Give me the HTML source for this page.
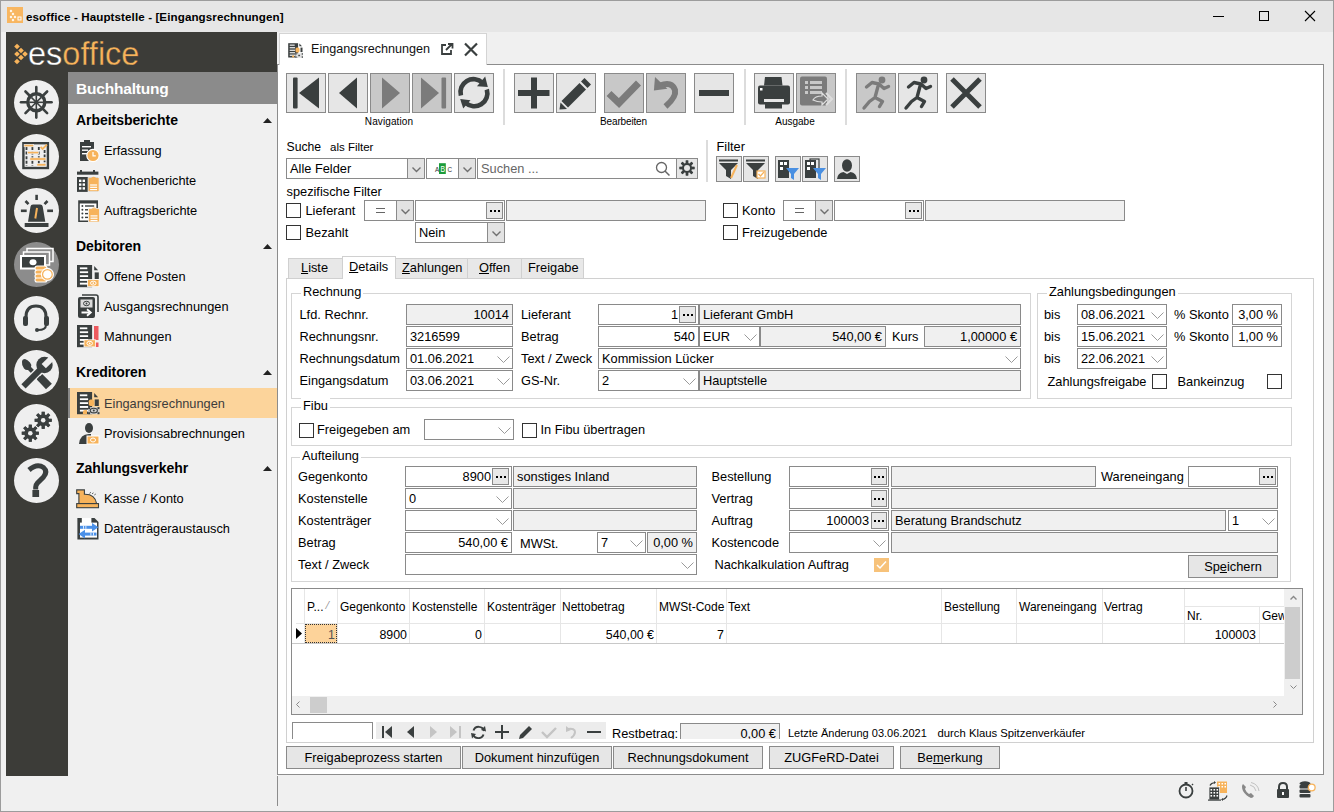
<!DOCTYPE html>
<html><head><meta charset="utf-8">
<style>
*{box-sizing:border-box;margin:0;padding:0}
html,body{width:1334px;height:812px;overflow:hidden;background:#f0f0f0;font-family:"Liberation Sans",sans-serif;font-size:13px;color:#000}
.a{position:absolute}
svg.a{overflow:visible}
.t{position:absolute;white-space:nowrap}
</style></head><body>
<div class="a" style="left:0px;top:0px;width:1334px;height:812px;background:#f0f0f0;"></div>
<div class="a" style="left:0px;top:0px;width:1334px;height:32px;background:#e6e6e6;"></div>
<div class="a" style="left:0px;top:0px;width:1334px;height:812px;border:1px solid #9c9c9c;z-index:50;"></div>
<div class="a" style="left:7px;top:7px;width:16px;height:16px;background:#f8b660;"></div>
<svg class="a" style="left:7px;top:7px;" width="16" height="16" viewBox="0 0 16 16"><g fill="#fff"><rect x="3" y="3" width="2" height="2" transform="rotate(45 4 4)"/><rect x="5" y="6" width="2" height="2" transform="rotate(45 6 7)"/><rect x="3" y="9" width="2" height="2" transform="rotate(45 4 10)"/><rect x="7" y="9" width="2" height="2" transform="rotate(45 8 10)"/><rect x="5" y="12" width="2" height="2" transform="rotate(45 6 13)"/><rect x="11" y="10" width="3" height="3" fill="none" stroke="#fff" stroke-width="1"/></g></svg>
<div class="t" style="left:26px;top:8.5px;height:16px;line-height:16px;font-size:11.6px;font-weight:bold;letter-spacing:0.1px;">esoffice - Hauptstelle - [Eingangsrechnungen]</div>
<div class="a" style="left:1213px;top:16px;width:11px;height:1px;background:#000;"></div>
<div class="a" style="left:1259px;top:11px;width:10px;height:10px;border:1px solid #000;"></div>
<svg class="a" style="left:1305px;top:11px;" width="10" height="10" viewBox="0 0 10 10"><path d="M0 0 L10 10 M10 0 L0 10" stroke="#000" stroke-width="1.1"/></svg>
<div class="a" style="left:6px;top:32px;width:62px;height:744px;background:#3c3c38;"></div>
<div class="a" style="left:6px;top:32px;width:271px;height:40px;background:#3c3c38;"></div>
<svg class="a" style="left:13px;top:43px;" width="16" height="22" viewBox="0 0 16 22"><g fill="#f7b35b"><rect x="2" y="1.5" width="4" height="4" transform="rotate(45 4 3.5)"/><rect x="6" y="5.5" width="4" height="4" transform="rotate(45 8 7.5)"/><rect x="2" y="9" width="4" height="4" transform="rotate(45 4 11)"/><rect x="10" y="9" width="4" height="4" transform="rotate(45 12 11)"/><rect x="6" y="12.5" width="4" height="4" transform="rotate(45 8 14.5)"/><rect x="2" y="16.5" width="4" height="4" transform="rotate(45 4 18.5)"/></g></svg>
<div class="t" style="left:28px;top:34.0px;height:40px;line-height:40px;font-size:32.5px;letter-spacing:0px;-webkit-text-stroke:0.35px #3c3c38;"><span style="color:#fff">es</span><span style="color:#f7b35b">office</span></div>
<div class="a" style="left:68px;top:72px;width:209px;height:704px;background:#f0f0f0;"></div>
<div class="a" style="left:68px;top:72px;width:209px;height:32px;background:#8b8b8b;"></div>
<div class="t" style="left:76px;top:78.0px;height:21px;line-height:21px;font-size:15.5px;font-weight:bold;color:#fff;letter-spacing:-0.2px;">Buchhaltung</div>
<div class="a" style="left:14px;top:79.5px;width:45px;height:45.0px;background:#efefef;border-radius:50%;"></div>
<div class="a" style="left:14px;top:133.5px;width:45px;height:45.0px;background:#efefef;border-radius:50%;"></div>
<div class="a" style="left:14px;top:187.5px;width:45px;height:45.0px;background:#efefef;border-radius:50%;"></div>
<div class="a" style="left:14px;top:241.5px;width:45px;height:45.0px;background:#8c8c8c;border-radius:50%;"></div>
<div class="a" style="left:14px;top:295.5px;width:45px;height:45.0px;background:#efefef;border-radius:50%;"></div>
<div class="a" style="left:14px;top:349.5px;width:45px;height:45.0px;background:#efefef;border-radius:50%;"></div>
<div class="a" style="left:14px;top:403.5px;width:45px;height:45.0px;background:#efefef;border-radius:50%;"></div>
<div class="a" style="left:14px;top:457.5px;width:45px;height:45.0px;background:#efefef;border-radius:50%;"></div>
<svg class="a" style="left:16px;top:82px;" width="40" height="40" viewBox="0 0 40 40"><g transform="translate(20.3 20.3)" stroke="#3a3f3f" fill="none"><circle r="8.5" stroke-width="3.4"/><g stroke-width="2.6" stroke-linecap="round"><line x1="0" y1="-10" x2="0" y2="-15.3" transform="rotate(0)"/><line x1="0" y1="-10" x2="0" y2="-15.3" transform="rotate(45)"/><line x1="0" y1="-10" x2="0" y2="-15.3" transform="rotate(90)"/><line x1="0" y1="-10" x2="0" y2="-15.3" transform="rotate(135)"/><line x1="0" y1="-10" x2="0" y2="-15.3" transform="rotate(180)"/><line x1="0" y1="-10" x2="0" y2="-15.3" transform="rotate(225)"/><line x1="0" y1="-10" x2="0" y2="-15.3" transform="rotate(270)"/><line x1="0" y1="-10" x2="0" y2="-15.3" transform="rotate(315)"/></g><g stroke-width="1.6"><line x1="0" y1="0" x2="0" y2="-7" transform="rotate(0)"/><line x1="0" y1="0" x2="0" y2="-7" transform="rotate(45)"/><line x1="0" y1="0" x2="0" y2="-7" transform="rotate(90)"/><line x1="0" y1="0" x2="0" y2="-7" transform="rotate(135)"/><line x1="0" y1="0" x2="0" y2="-7" transform="rotate(180)"/><line x1="0" y1="0" x2="0" y2="-7" transform="rotate(225)"/><line x1="0" y1="0" x2="0" y2="-7" transform="rotate(270)"/><line x1="0" y1="0" x2="0" y2="-7" transform="rotate(315)"/></g><circle r="2" fill="#3a3f3f" stroke="none"/></g></svg>
<svg class="a" style="left:16px;top:136px;" width="40" height="40" viewBox="0 0 40 40"><rect x="7.4" y="7.2" width="24.5" height="24.8" fill="none" stroke="#3a3f3f" stroke-width="2.4"/><g stroke="#3a3f3f" stroke-width="1.8" stroke-dasharray="3 1.6"><line x1="10.5" y1="11" x2="10.5" y2="30"/><line x1="16.4" y1="11" x2="16.4" y2="30"/><line x1="22.8" y1="11" x2="22.8" y2="30"/><line x1="28.6" y1="14" x2="28.6" y2="30"/></g><g fill="#f7b35b" stroke="#efefef" stroke-width="0.6"><rect x="8.1" y="8.4" width="9.6" height="2.4"/><rect x="11.3" y="15.4" width="11.5" height="2.4"/><rect x="13.9" y="21.8" width="16" height="2.4"/><rect x="20.9" y="27.6" width="9" height="2.4"/></g><path d="M24.6 10.8 L26.6 13 L31 8.6" stroke="#f7b35b" stroke-width="1.8" fill="none"/></svg>
<svg class="a" style="left:16px;top:190px;" width="40" height="40" viewBox="0 0 40 40"><path d="M12 31.7 L14.5 16.5 Q14.8 14.4 17 14.4 H24.2 Q26.4 14.4 26.7 16.5 L29.3 31.7 Z" fill="#3a3f3f"/><rect x="8.7" y="33" width="23.8" height="4" fill="#3a3f3f"/><path d="M21 18 L19.3 28.5" stroke="#f7b35b" stroke-width="2"/><g stroke="#3a3f3f" stroke-width="2.6"><line x1="20.6" y1="4.8" x2="20.6" y2="10"/><line x1="9.5" y1="11" x2="12.5" y2="14.2"/><line x1="31.5" y1="11" x2="28.5" y2="14.2"/><line x1="4.9" y1="20.8" x2="10.7" y2="20.8"/><line x1="31.2" y1="20.8" x2="37" y2="20.8"/></g></svg>
<svg class="a" style="left:16px;top:244px;" width="40" height="40" viewBox="0 0 40 40"><g fill="#8c8c8c" stroke="#fff" stroke-width="1.5"><rect x="11" y="4.5" width="26" height="13"/><rect x="7.5" y="8" width="26" height="13"/></g><rect x="4" y="11" width="26" height="14.5" fill="#fff"/><rect x="6" y="13" width="22" height="10.5" fill="#3a3f3f"/><ellipse cx="17" cy="18.2" rx="3.5" ry="3" fill="#fff"/><g fill="#f7b35b" stroke="#fff" stroke-width="1.1"><rect x="19" y="22" width="12" height="4.5" rx="2.2"/><rect x="19" y="26" width="12" height="4.5" rx="2.2"/><rect x="19" y="30" width="12" height="4.5" rx="2.2"/><rect x="19" y="34" width="12" height="4" rx="2"/><circle cx="31.4" cy="30.4" r="6"/></g><circle cx="31.4" cy="30.4" r="4.2" fill="#fff"/></svg>
<svg class="a" style="left:16px;top:298px;" width="40" height="40" viewBox="0 0 40 40"><path d="M10 24 L10 19 Q10 8 20 8 Q30 8 30 19 L30 24" fill="none" stroke="#3a3f3f" stroke-width="3"/><rect x="7" y="18" width="5" height="10" rx="2" fill="#3a3f3f"/><rect x="28" y="18" width="5" height="10" rx="2" fill="#3a3f3f"/><path d="M30 27 Q30 32 22 32" fill="none" stroke="#3a3f3f" stroke-width="2"/><circle cx="21" cy="32" r="2" fill="#3a3f3f"/></svg>
<svg class="a" style="left:16px;top:352px;" width="40" height="40" viewBox="0 0 40 40"><g fill="#3a3f3f"><path d="M6 10 Q6 7 9 7 Q11.5 7.5 14 10.5 Q16 13 15 15 L26 26 L23 29 L12 18 Q10 18.5 8 16.5 Q5.5 13 6 10 Z"/><path d="M26.2 22.1 L35.9 31.8 L30 37.2 L20.8 27.5 Z"/></g><path d="M7.5 34.3 L24 17.8" stroke="#efefef" stroke-width="8.6" stroke-linecap="butt"/><path d="M7.5 34.3 L24 17.8" stroke="#3a3f3f" stroke-width="6"/><circle cx="28.5" cy="13" r="8.2" fill="#3a3f3f"/><rect x="29" y="4" width="6" height="12" fill="#efefef" transform="rotate(45 32 10)"/></svg>
<svg class="a" style="left:16px;top:406px;" width="40" height="40" viewBox="0 0 40 40"><circle cx="27.2" cy="14.3" r="6" fill="#3a3f3f"/><rect x="25.7" y="5.800000000000001" width="3" height="17" fill="#3a3f3f" transform="rotate(0.0 27.2 14.3)"/><rect x="25.7" y="5.800000000000001" width="3" height="17" fill="#3a3f3f" transform="rotate(45.0 27.2 14.3)"/><rect x="25.7" y="5.800000000000001" width="3" height="17" fill="#3a3f3f" transform="rotate(90.0 27.2 14.3)"/><rect x="25.7" y="5.800000000000001" width="3" height="17" fill="#3a3f3f" transform="rotate(135.0 27.2 14.3)"/><rect x="25.7" y="5.800000000000001" width="3" height="17" fill="#3a3f3f" transform="rotate(180.0 27.2 14.3)"/><rect x="25.7" y="5.800000000000001" width="3" height="17" fill="#3a3f3f" transform="rotate(225.0 27.2 14.3)"/><rect x="25.7" y="5.800000000000001" width="3" height="17" fill="#3a3f3f" transform="rotate(270.0 27.2 14.3)"/><rect x="25.7" y="5.800000000000001" width="3" height="17" fill="#3a3f3f" transform="rotate(315.0 27.2 14.3)"/><circle cx="27.2" cy="14.3" r="2.2800000000000002" fill="#efefef"/><circle cx="14.3" cy="27.2" r="6" fill="#3a3f3f"/><rect x="12.8" y="18.7" width="3" height="17" fill="#3a3f3f" transform="rotate(0.0 14.3 27.2)"/><rect x="12.8" y="18.7" width="3" height="17" fill="#3a3f3f" transform="rotate(45.0 14.3 27.2)"/><rect x="12.8" y="18.7" width="3" height="17" fill="#3a3f3f" transform="rotate(90.0 14.3 27.2)"/><rect x="12.8" y="18.7" width="3" height="17" fill="#3a3f3f" transform="rotate(135.0 14.3 27.2)"/><rect x="12.8" y="18.7" width="3" height="17" fill="#3a3f3f" transform="rotate(180.0 14.3 27.2)"/><rect x="12.8" y="18.7" width="3" height="17" fill="#3a3f3f" transform="rotate(225.0 14.3 27.2)"/><rect x="12.8" y="18.7" width="3" height="17" fill="#3a3f3f" transform="rotate(270.0 14.3 27.2)"/><rect x="12.8" y="18.7" width="3" height="17" fill="#3a3f3f" transform="rotate(315.0 14.3 27.2)"/><circle cx="14.3" cy="27.2" r="2.2800000000000002" fill="#efefef"/></svg>
<svg class="a" style="left:16px;top:460px;" width="40" height="40" viewBox="0 0 40 40"><path d="M13 10 Q21 3 27.5 7.5 Q32 11.5 27.5 17 L21.5 23 Q19.7 25 19.7 27 V29.5" fill="none" stroke="#3a3f3f" stroke-width="5"/><rect x="16.4" y="30" width="6.7" height="7" fill="#3a3f3f"/></svg>
<div class="a" style="left:68px;top:388px;width:209px;height:30px;background:#fcd49b;"></div>
<div class="a" style="left:68px;top:388px;width:2px;height:30px;background:#8a8a8a;"></div>
<div class="t" style="left:76px;top:110.5px;height:19px;line-height:19px;font-size:14px;font-weight:bold;letter-spacing:-0.05px;">Arbeitsberichte</div>
<svg class="a" style="left:263px;top:118px;" width="9" height="5" viewBox="0 0 9 5"><path d="M0 5 L4.5 0 L9 5 Z" fill="#222"/></svg>
<div class="t" style="left:76px;top:236.5px;height:19px;line-height:19px;font-size:14px;font-weight:bold;letter-spacing:-0.05px;">Debitoren</div>
<svg class="a" style="left:263px;top:244px;" width="9" height="5" viewBox="0 0 9 5"><path d="M0 5 L4.5 0 L9 5 Z" fill="#222"/></svg>
<div class="t" style="left:76px;top:362.5px;height:19px;line-height:19px;font-size:14px;font-weight:bold;letter-spacing:-0.05px;">Kreditoren</div>
<svg class="a" style="left:263px;top:370px;" width="9" height="5" viewBox="0 0 9 5"><path d="M0 5 L4.5 0 L9 5 Z" fill="#222"/></svg>
<div class="t" style="left:76px;top:458.5px;height:19px;line-height:19px;font-size:14px;font-weight:bold;letter-spacing:-0.05px;">Zahlungsverkehr</div>
<svg class="a" style="left:263px;top:466px;" width="9" height="5" viewBox="0 0 9 5"><path d="M0 5 L4.5 0 L9 5 Z" fill="#222"/></svg>
<div class="t" style="left:104px;top:141.5px;height:17px;line-height:17px;font-size:12.8px;">Erfassung</div>
<div class="t" style="left:104px;top:171.5px;height:17px;line-height:17px;font-size:12.8px;">Wochenberichte</div>
<div class="t" style="left:104px;top:201.5px;height:17px;line-height:17px;font-size:12.8px;">Auftragsberichte</div>
<div class="t" style="left:104px;top:267.5px;height:17px;line-height:17px;font-size:12.8px;">Offene Posten</div>
<div class="t" style="left:104px;top:297.5px;height:17px;line-height:17px;font-size:12.8px;">Ausgangsrechnungen</div>
<div class="t" style="left:104px;top:327.5px;height:17px;line-height:17px;font-size:12.8px;">Mahnungen</div>
<div class="t" style="left:104px;top:394.5px;height:17px;line-height:17px;font-size:12.8px;color:#3c3c3c;">Eingangsrechnungen</div>
<div class="t" style="left:104px;top:424.5px;height:17px;line-height:17px;font-size:12.8px;">Provisionsabrechnungen</div>
<div class="t" style="left:104px;top:489.5px;height:17px;line-height:17px;font-size:12.8px;">Kasse / Konto</div>
<div class="t" style="left:104px;top:519.5px;height:17px;line-height:17px;font-size:12.8px;">Datentr&auml;geraustausch</div>
<svg class="a" style="left:78px;top:139px;" width="22" height="24" viewBox="0 0 22 24"><path d="M2 3 H16 V22 H2 Z" fill="#3a3f3f"/><rect x="6" y="1" width="6" height="3" fill="#3a3f3f"/><g fill="#fff"><rect x="4" y="7" width="9" height="1.4"/><rect x="4" y="10.5" width="6" height="1.4"/><rect x="4" y="14" width="5" height="1.4"/></g><circle cx="15" cy="16.5" r="6.2" fill="#f7b35b" stroke="#fff" stroke-width="1.2"/><path d="M15 13 V16.8 H17.8" stroke="#fff" stroke-width="1.2" fill="none"/></svg>
<svg class="a" style="left:74px;top:164px;" width="30" height="62" viewBox="0 0 30 62"><rect x="3" y="7.6" width="21.4" height="3.1" fill="#3a3f3f"/><rect x="6" y="6" width="2" height="2" fill="#3a3f3f"/><rect x="19" y="6" width="2" height="2" fill="#3a3f3f"/><rect x="3" y="13" width="21" height="14.9" fill="#3a3f3f"/><g fill="#fff"><rect x="5" y="15.6" width="2.4" height="2.4"/><rect x="8.6" y="15.6" width="2.4" height="2.4"/><rect x="5" y="19.4" width="2.4" height="2.4"/><rect x="8.6" y="19.4" width="2.4" height="2.4"/><rect x="5" y="23.2" width="2.4" height="2.4"/><rect x="8.6" y="23.2" width="2.4" height="2.4"/></g><rect x="14.1" y="13.6" width="11" height="14" fill="#f7b35b" stroke="#f0f0f0" stroke-width="0.8"/><path d="M17.1 13.9 Q19.6 11.399999999999999 22.1 13.9 Z" fill="#f7b35b"/><g fill="#fff"><rect x="16.1" y="20.4" width="7" height="1.2"/><rect x="16.1" y="22.7" width="7" height="1.2"/><rect x="16.1" y="25.0" width="7" height="1.2"/></g></svg>
<svg class="a" style="left:74px;top:164px;" width="30" height="62" viewBox="0 0 30 62"><rect x="4.2" y="36.3" width="19.8" height="21.7" fill="#3a3f3f"/><rect x="5.8" y="39.5" width="16.6" height="17" fill="#fff"/><g fill="#3a3f3f"><circle cx="8.4" cy="42" r="1"/><circle cx="8.4" cy="45.8" r="1"/><circle cx="8.4" cy="49.6" r="1"/><circle cx="8.4" cy="53.4" r="1"/><rect x="11" y="41.3" width="9.2" height="1.4"/><rect x="11" y="45.1" width="3" height="1.4"/><rect x="11" y="48.9" width="3" height="1.4"/><rect x="11" y="52.7" width="3" height="1.4"/></g><rect x="14.5" y="44.5" width="11" height="13.5" fill="#f7b35b" stroke="#f0f0f0" stroke-width="0.8"/><path d="M17.5 44.8 Q20.0 42.3 22.5 44.8 Z" fill="#f7b35b"/><g fill="#fff"><rect x="16.5" y="51.3" width="7" height="1.2"/><rect x="16.5" y="53.6" width="7" height="1.2"/><rect x="16.5" y="55.9" width="7" height="1.2"/></g></svg>
<svg class="a" style="left:77px;top:265px;" width="24" height="24" viewBox="0 0 24 24"><rect x="0" y="0" width="15.1" height="22.2" fill="#3a3f3f"/><g fill="#fff"><rect x="2.9" y="2.4" width="7.4" height="1.8"/><rect x="2.9" y="6.3" width="8.2" height="1.8"/><rect x="2.9" y="10.2" width="8.2" height="1.8"/><rect x="2.9" y="14" width="8.2" height="1.9"/><rect x="2.9" y="17.7" width="8.2" height="1.9"/></g><path d="M17.2 1.1 L21.1 5.2 L17.2 5.2 Z" fill="#3a3f3f"/><rect x="17.7" y="7.4" width="4.1" height="6.6" fill="#3a3f3f"/><rect x="10.6" y="14.6" width="11.4" height="7.1" fill="#f7b35b" stroke="#fff" stroke-width="0.8"/><ellipse cx="16.3" cy="18.15" rx="2.8" ry="2" fill="none" stroke="#fff" stroke-width="1"/><circle cx="16.3" cy="18.15" r="0.8" fill="#fff"/></svg>
<svg class="a" style="left:77px;top:294px;" width="24" height="26" viewBox="0 0 24 26"><path d="M5 1 H19 Q21 1 21 3 V18" fill="none" stroke="#3a3f3f" stroke-width="1.6"/><rect x="1" y="3" width="17" height="21" rx="2" fill="#3a3f3f"/><rect x="3.5" y="5.5" width="12" height="8" fill="#dcdcdc"/><ellipse cx="9.5" cy="9.5" rx="3" ry="2.2" fill="none" stroke="#3a3f3f" stroke-width="1"/><circle cx="9.5" cy="9.5" r="0.9" fill="#3a3f3f"/><path d="M4.5 18.5 H12.5" stroke="#fff" stroke-width="2"/><path d="M10 15.3 L13.8 18.5 L10 21.7" fill="none" stroke="#fff" stroke-width="1.8"/></svg>
<svg class="a" style="left:77px;top:325px;" width="24" height="24" viewBox="0 0 24 24"><rect x="0" y="0" width="15.1" height="22.2" fill="#3a3f3f"/><g fill="#fff"><rect x="2.9" y="2.4" width="7.4" height="1.8"/><rect x="2.9" y="6.3" width="8.2" height="1.8"/><rect x="2.9" y="10.2" width="8.2" height="1.8"/><rect x="2.9" y="14" width="8.2" height="1.9"/><rect x="2.9" y="17.7" width="8.2" height="1.9"/></g><rect x="17" y="1" width="4.5" height="14" fill="#ee5a5f"/><rect x="17" y="17.5" width="4.5" height="4.5" fill="#ee5a5f"/><rect x="7" y="14.8" width="11.4" height="7.1" fill="#f7b35b" stroke="#fff" stroke-width="0.8"/><ellipse cx="12.7" cy="18.35" rx="2.8" ry="2" fill="none" stroke="#fff" stroke-width="1"/><circle cx="12.7" cy="18.35" r="0.8" fill="#fff"/></svg>
<svg class="a" style="left:77px;top:392px;" width="24" height="24" viewBox="0 0 24 24"><rect x="0" y="0" width="15.1" height="22.2" fill="#3a3f3f"/><g fill="#fff"><rect x="2.9" y="2.4" width="7.4" height="1.8"/><rect x="2.9" y="6.3" width="8.2" height="1.8"/><rect x="2.9" y="10.2" width="8.2" height="1.8"/><rect x="2.9" y="14" width="8.2" height="1.9"/><rect x="2.9" y="17.7" width="8.2" height="1.9"/></g><path d="M17.2 1.1 L21.1 5.2 L17.2 5.2 Z" fill="#3a3f3f"/><rect x="17.7" y="7.4" width="4.1" height="6.6" fill="#3a3f3f"/><rect x="11.8" y="7.4" width="5.2" height="6.6" rx="1.8" fill="#f7b35b"/><path d="M5.9 22 V20 Q5.9 18.1 8 18.1 H10 V22 Z" fill="#f7b35b"/><rect x="11.1" y="15.1" width="11.4" height="7.1" fill="#cfcfcf"/><g fill="#3a3f3f"><rect x="11.1" y="15.1" width="2" height="2"/><rect x="20.5" y="15.1" width="2" height="2"/><rect x="11.1" y="20.2" width="2" height="2"/><rect x="20.5" y="20.2" width="2" height="2"/></g><ellipse cx="16.8" cy="18.6" rx="3.6" ry="2.3" fill="none" stroke="#3a3f3f" stroke-width="1.1"/><circle cx="16.8" cy="18.6" r="1" fill="#3a3f3f"/></svg>
<svg class="a" style="left:78px;top:422px;" width="22" height="24" viewBox="0 0 22 24"><ellipse cx="11" cy="6" rx="4" ry="5" fill="#3a3f3f"/><path d="M1 22 Q2 12 11 12 L13 12 L13 22 Z" fill="#3a3f3f"/><rect x="9" y="14" width="12" height="8" fill="#f7b35b" stroke="#fff" stroke-width="1"/><ellipse cx="15" cy="18" rx="2.5" ry="2" fill="none" stroke="#fff" stroke-width="1"/></svg>
<svg class="a" style="left:70px;top:484px;" width="34" height="30" viewBox="0 0 34 30"><path d="M6.7 5.9 H14.4 V10.3 Q25 10 26.6 19.6 H8.9 V9.6 H6.7 Z" fill="#f7b35b" stroke="#3a3f3f" stroke-width="1.1"/><rect x="6.7" y="19.6" width="21.8" height="4.1" fill="#f7b35b" stroke="#3a3f3f" stroke-width="1.1"/><path d="M19.5 9.3 L21 8.3 M22 9.8 L23.5 8.8 M24.3 11 L25.8 10" stroke="#3a3f3f" stroke-width="0.8"/></svg>
<svg class="a" style="left:70px;top:484px;" width="34" height="60" viewBox="0 0 34 60"><path d="M7.4 34 H24.5 L28.5 38 V55.4 H7.4 Z" fill="#3a3f3f"/><rect x="11.8" y="34" width="9.6" height="5" fill="#fff"/><rect x="10" y="38.6" width="17" height="15" fill="#fff"/><g fill="#4a90e8"><rect x="10" y="41.8" width="13" height="3"/><path d="M22 39 L28.5 43.3 L22 47.6 Z"/><rect x="14" y="48.6" width="12.5" height="3"/><path d="M15 45.8 L8.6 50.1 L15 54.4 Z"/></g><g fill="#fff"><rect x="13" y="41.8" width="0.8" height="3"/><rect x="15.5" y="41.8" width="0.8" height="3"/><rect x="20.5" y="48.6" width="0.8" height="3"/><rect x="23" y="48.6" width="0.8" height="3"/></g></svg>
<div class="a" style="left:277px;top:64px;width:1047px;height:711px;background:#fff;border:1px solid #8c8c8c;"></div>
<div class="a" style="left:279px;top:33px;width:208px;height:32px;background:#fff;border:1px solid #d4d4d4;border-bottom:none;"></div>
<svg class="a" style="left:287.5px;top:42.5px;" width="16" height="16" viewBox="0 0 16 16"><rect x="0.2" y="0.2" width="9.9" height="14.3" fill="#3a3f3f"/><g fill="#fff"><rect x="1.7" y="1.6" width="5" height="1.1"/><rect x="1.7" y="4.2" width="5.4" height="1.1"/><rect x="1.7" y="6.7" width="5.4" height="1.1"/><rect x="1.7" y="9.2" width="5.4" height="1.1"/><rect x="1.7" y="11.6" width="5.4" height="1.2"/></g><path d="M11.4 0.5 L14 3.2 L11.4 3.2 Z" fill="#3a3f3f"/><rect x="12.5" y="4.6" width="2" height="4.5" fill="#3a3f3f"/><rect x="7.5" y="4.6" width="4" height="5" rx="1.5" fill="#f7b35b"/><circle cx="5.2" cy="13.4" r="1.1" fill="#f7b35b"/><rect x="7.3" y="10.3" width="7.7" height="4.4" fill="#ddd"/><g fill="#3a3f3f"><rect x="7.3" y="10.3" width="1.3" height="1.3"/><rect x="13.7" y="10.3" width="1.3" height="1.3"/><rect x="7.3" y="13.4" width="1.3" height="1.3"/><rect x="13.7" y="13.4" width="1.3" height="1.3"/><rect x="10.3" y="11.8" width="1.6" height="1.4"/></g></svg>
<div class="t" style="left:311px;top:41.0px;height:17px;line-height:17px;font-size:12.6px;color:#111;">Eingangsrechnungen</div>
<svg class="a" style="left:440px;top:43px;" width="14" height="13" viewBox="0 0 14 13"><path d="M6 2 H2 V11 H11 V7" fill="none" stroke="#3a3f3f" stroke-width="1.8"/><path d="M6 7 L12 1 M8 1 H12.5 V5.5" fill="none" stroke="#3a3f3f" stroke-width="1.8"/></svg>
<svg class="a" style="left:464px;top:43px;" width="14" height="13" viewBox="0 0 14 13"><path d="M1 0.5 L13 12.5 M13 0.5 L1 12.5" stroke="#3a3f3f" stroke-width="2.2"/></svg>
<div class="a" style="left:286px;top:73px;width:40px;height:40px;background:#e6e6e6;border:1px solid #8a8a8a;"></div>
<svg class="a" style="left:286px;top:73px;" width="40" height="40" viewBox="0 0 40 40"><rect x="7" y="4.5" width="4.6" height="31" rx="1" fill="#3a3f3f"/><path d="M33 4.5 L13 20 L33 35.5 Z" fill="#3a3f3f"/></svg>
<div class="a" style="left:328px;top:73px;width:40px;height:40px;background:#e6e6e6;border:1px solid #8a8a8a;"></div>
<svg class="a" style="left:328px;top:73px;" width="40" height="40" viewBox="0 0 40 40"><path d="M29 4.5 L11 20 L29 35.5 Z" fill="#3a3f3f"/></svg>
<div class="a" style="left:370px;top:73px;width:40px;height:40px;background:#c8c8c8;border:1px solid #8a8a8a;"></div>
<svg class="a" style="left:370px;top:73px;" width="40" height="40" viewBox="0 0 40 40"><path d="M12 4.5 L30 20 L12 35.5 Z" fill="#7b7b7b"/></svg>
<div class="a" style="left:412px;top:73px;width:40px;height:40px;background:#c8c8c8;border:1px solid #8a8a8a;"></div>
<svg class="a" style="left:412px;top:73px;" width="40" height="40" viewBox="0 0 40 40"><path d="M9 4.5 L27 20 L9 35.5 Z" fill="#7b7b7b"/><rect x="29.5" y="4.5" width="4.6" height="31" rx="1" fill="#7b7b7b"/></svg>
<div class="a" style="left:454px;top:73px;width:40px;height:40px;background:#e6e6e6;border:1px solid #8a8a8a;"></div>
<svg class="a" style="left:454px;top:73px;" width="40" height="40" viewBox="0 0 40 40"><g fill="none" stroke="#3a3f3f" stroke-width="4.6"><path d="M6.9 22.5 A13 13 0 0 1 28.5 9.8"/><path d="M32.8 16.5 A13 13 0 0 1 11.5 29.8"/></g><path d="M23 13.3 L31.2 3.6 L33.8 14 Z" fill="#3a3f3f"/><path d="M16.5 27.3 L9.2 35.6 L6.2 25.9 Z" fill="#3a3f3f"/></svg>
<div class="a" style="left:503px;top:69px;width:2px;height:56px;background:#dcdcdc;"></div>
<div class="a" style="left:514px;top:73px;width:40px;height:40px;background:#e6e6e6;border:1px solid #8a8a8a;"></div>
<svg class="a" style="left:514px;top:73px;" width="40" height="40" viewBox="0 0 40 40"><rect x="17" y="4.5" width="6" height="31" fill="#3a3f3f"/><rect x="4" y="17" width="31.5" height="6" fill="#3a3f3f"/></svg>
<div class="a" style="left:556px;top:73px;width:40px;height:40px;background:#e6e6e6;border:1px solid #8a8a8a;"></div>
<svg class="a" style="left:556px;top:73px;" width="40" height="40" viewBox="0 0 40 40"><path d="M28.5 5 L35 11.5 L31.5 15 L25 8.5 Z" fill="#3a3f3f"/><path d="M23.5 10 L30 16.5 L12 34.5 L5.5 28 Z" fill="#3a3f3f"/><path d="M4.5 29.5 L11 36 L3.5 36.5 Z" fill="#3a3f3f"/></svg>
<div class="a" style="left:604px;top:73px;width:40px;height:40px;background:#c8c8c8;border:1px solid #8a8a8a;"></div>
<svg class="a" style="left:604px;top:73px;" width="40" height="40" viewBox="0 0 40 40"><path d="M5 20.5 L15 30 L34.5 10" fill="none" stroke="#7b7b7b" stroke-width="7" stroke-linejoin="miter"/></svg>
<div class="a" style="left:646px;top:73px;width:40px;height:40px;background:#c8c8c8;border:1px solid #8a8a8a;"></div>
<svg class="a" style="left:646px;top:73px;" width="40" height="40" viewBox="0 0 40 40"><path d="M14 12.5 Q26 8 29 17 Q30.5 24 19.5 33.5" fill="none" stroke="#7b7b7b" stroke-width="6"/><path d="M9 4 L7.9 17.4 L21.4 15.7 Z" fill="#7b7b7b"/></svg>
<div class="a" style="left:694px;top:73px;width:40px;height:40px;background:#e6e6e6;border:1px solid #8a8a8a;"></div>
<svg class="a" style="left:694px;top:73px;" width="40" height="40" viewBox="0 0 40 40"><rect x="5" y="17" width="30" height="6" fill="#3a3f3f"/></svg>
<div class="a" style="left:744px;top:69px;width:2px;height:56px;background:#dcdcdc;"></div>
<div class="a" style="left:754px;top:73px;width:40px;height:40px;background:#e6e6e6;border:1px solid #8a8a8a;"></div>
<svg class="a" style="left:754px;top:73px;" width="40" height="40" viewBox="0 0 40 40"><path d="M11 4 H27.5 L28.5 12.5 H10 Z" fill="#3a3f3f"/><rect x="4" y="12.5" width="32" height="19" rx="2" fill="#3a3f3f"/><rect x="10" y="26" width="20" height="3" fill="#e6e6e6"/><rect x="11" y="29" width="17" height="6.5" fill="#3a3f3f"/><rect x="6" y="15" width="2.5" height="2.5" fill="#fff"/></svg>
<div class="a" style="left:796px;top:73px;width:40px;height:40px;background:#c8c8c8;border:1px solid #8a8a8a;"></div>
<svg class="a" style="left:796px;top:73px;" width="40" height="40" viewBox="0 0 40 40"><rect x="4" y="3.5" width="27" height="29" rx="2" fill="#7b7b7b"/><g fill="#c8c8c8"><rect x="9" y="8" width="3" height="3"/><rect x="14" y="8" width="12" height="3"/><rect x="9" y="13" width="3" height="3"/><rect x="14" y="13" width="12" height="3"/><rect x="9" y="18" width="3" height="3"/><rect x="14" y="18" width="12" height="3"/></g><path d="M17 27 Q19 23 26 23 L26 20 L32 26 L26 32 L26 29 Q21 29 17 27 Z" fill="#7b7b7b" stroke="#ddd" stroke-width="1.2"/><path d="M30 20 L36 26 L30 32" fill="none" stroke="#ddd" stroke-width="2"/></svg>
<div class="a" style="left:845px;top:69px;width:2px;height:56px;background:#dcdcdc;"></div>
<div class="a" style="left:856px;top:73px;width:40px;height:40px;background:#c8c8c8;border:1px solid #8a8a8a;"></div>
<svg class="a" style="left:856px;top:73px;" width="40" height="40" viewBox="0 0 40 40"><circle cx="26" cy="7" r="3.4" fill="#7b7b7b"/><path d="M10.5 14 L16 9.5 L23 11 L28 15.5 L32.5 13.5 M22.5 11.5 L19 24.5 L26.5 28.5 L23.5 33.5 M19 24.5 L13.5 28.5 L8 35" fill="none" stroke="#7b7b7b" stroke-width="3.4" stroke-linecap="round" stroke-linejoin="round"/></svg>
<div class="a" style="left:898px;top:73px;width:40px;height:40px;background:#e6e6e6;border:1px solid #8a8a8a;"></div>
<svg class="a" style="left:898px;top:73px;" width="40" height="40" viewBox="0 0 40 40"><circle cx="26" cy="7" r="3.4" fill="#3a3f3f"/><path d="M10.5 14 L16 9.5 L23 11 L28 15.5 L32.5 13.5 M22.5 11.5 L19 24.5 L26.5 28.5 L23.5 33.5 M19 24.5 L13.5 28.5 L8 35" fill="none" stroke="#3a3f3f" stroke-width="3.4" stroke-linecap="round" stroke-linejoin="round"/></svg>
<div class="a" style="left:946px;top:73px;width:40px;height:40px;background:#e6e6e6;border:1px solid #8a8a8a;"></div>
<svg class="a" style="left:946px;top:73px;" width="40" height="40" viewBox="0 0 40 40"><path d="M6 6 L34 34 M34 6 L6 34" stroke="#3a3f3f" stroke-width="5"/></svg>
<div class="t" style="left:289.0px;width:200px;text-align:center;top:115.0px;height:14px;line-height:14px;font-size:10px;letter-spacing:0.1px;">Navigation</div>
<div class="t" style="left:523.5px;width:200px;text-align:center;top:115.0px;height:14px;line-height:14px;font-size:10px;letter-spacing:-0.15px;">Bearbeiten</div>
<div class="t" style="left:695.0px;width:200px;text-align:center;top:115.0px;height:14px;line-height:14px;font-size:10px;">Ausgabe</div>
<div class="t" style="left:286.5px;top:138.5px;height:17px;line-height:17px;font-size:12.2px;">Suche</div>
<div class="t" style="left:330px;top:138.8px;height:16px;line-height:16px;font-size:11.5px;">als Filter</div>
<div class="a" style="left:286px;top:158px;width:139px;height:21px;background:#fff;border:1px solid #8a8a8a;"></div>
<div class="t" style="left:290px;top:160.0px;height:17px;line-height:17px;font-size:12.8px;">Alle Felder</div>
<div class="a" style="left:407px;top:159px;width:17px;height:19px;background:#e3e3e3;border-left:1px solid #8a8a8a;"></div>
<svg class="a" style="left:412px;top:166.5px;" width="9" height="5" viewBox="0 0 9 5"><path d="M0.5 0.5 L4.5 4.5 L8.5 0.5" fill="none" stroke="#707070" stroke-width="1.4"/></svg>
<div class="a" style="left:426px;top:158px;width:50px;height:21px;background:#fff;border:1px solid #8a8a8a;"></div>
<div class="a" style="left:458px;top:159px;width:17px;height:19px;background:#e3e3e3;border-left:1px solid #8a8a8a;"></div>
<svg class="a" style="left:463px;top:166.5px;" width="9" height="5" viewBox="0 0 9 5"><path d="M0.5 0.5 L4.5 4.5 L8.5 0.5" fill="none" stroke="#707070" stroke-width="1.4"/></svg>
<svg class="a" style="left:433px;top:162px;" width="22" height="14" viewBox="0 0 22 14"><text x="2" y="10.5" font-size="8" font-family="Liberation Sans" fill="#333" transform="scale(0.8 1)" transform-origin="2 10">A</text><rect x="6" y="1.2" width="6.8" height="10.8" fill="#1a9c3a"/><text x="7.4" y="10.3" font-size="8.5" font-family="Liberation Sans" fill="#fff" transform="scale(0.8 1)" transform-origin="7.4 10">B</text><text x="14.5" y="10.5" font-size="8" font-family="Liberation Sans" fill="#333" transform="scale(0.8 1)" transform-origin="14.5 10">C</text></svg>
<div class="a" style="left:477px;top:158px;width:200px;height:21px;background:#fff;border:1px solid #8a8a8a;"></div>
<div class="t" style="left:481px;top:160.0px;height:17px;line-height:17px;font-size:12.8px;color:#666;">Suchen ...</div>
<svg class="a" style="left:655px;top:161px;" width="16" height="15" viewBox="0 0 16 15"><circle cx="6.5" cy="6.5" r="5" fill="none" stroke="#666" stroke-width="1.3"/><path d="M10 10 L14.5 14.5" stroke="#666" stroke-width="1.5"/></svg>
<div class="a" style="left:676px;top:158px;width:22px;height:21px;background:#e6e6e6;border:1px solid #8a8a8a;"></div>
<svg class="a" style="left:677px;top:158px;" width="20" height="20" viewBox="0 0 20 20"><circle cx="10" cy="10" r="5" fill="#3a3f3f"/><rect x="8.8" y="2.5" width="2.4" height="15" fill="#3a3f3f" transform="rotate(0.0 10 10)"/><rect x="8.8" y="2.5" width="2.4" height="15" fill="#3a3f3f" transform="rotate(45.0 10 10)"/><rect x="8.8" y="2.5" width="2.4" height="15" fill="#3a3f3f" transform="rotate(90.0 10 10)"/><rect x="8.8" y="2.5" width="2.4" height="15" fill="#3a3f3f" transform="rotate(135.0 10 10)"/><rect x="8.8" y="2.5" width="2.4" height="15" fill="#3a3f3f" transform="rotate(180.0 10 10)"/><rect x="8.8" y="2.5" width="2.4" height="15" fill="#3a3f3f" transform="rotate(225.0 10 10)"/><rect x="8.8" y="2.5" width="2.4" height="15" fill="#3a3f3f" transform="rotate(270.0 10 10)"/><rect x="8.8" y="2.5" width="2.4" height="15" fill="#3a3f3f" transform="rotate(315.0 10 10)"/><circle cx="10" cy="10" r="3" fill="#e6e6e6"/></svg>
<div class="a" style="left:706px;top:140px;width:2px;height:42px;background:#dcdcdc;"></div>
<div class="t" style="left:716.5px;top:137.5px;height:17px;line-height:17px;font-size:12.8px;">Filter</div>
<div class="a" style="left:716px;top:156px;width:26px;height:26px;background:#e6e6e6;border:1px solid #8a8a8a;"></div>
<svg class="a" style="left:716px;top:156px;" width="26" height="26" viewBox="0 0 26 26"><path d="M3 7 H22 L15 14 V23 L10 20 V14 Z" fill="#3a3f3f"/><rect x="3" y="3.5" width="19" height="2" fill="#3a3f3f"/><path d="M21 9 L15 22" stroke="#f7b35b" stroke-width="2"/></svg>
<div class="a" style="left:743px;top:156px;width:26px;height:26px;background:#e6e6e6;border:1px solid #8a8a8a;"></div>
<svg class="a" style="left:743px;top:156px;" width="26" height="26" viewBox="0 0 26 26"><path d="M3 7 H22 L15 14 V23 L10 20 V14 Z" fill="#3a3f3f"/><rect x="3" y="3.5" width="19" height="2" fill="#3a3f3f"/><rect x="14" y="15" width="8" height="7" fill="#fff" stroke="#f7b35b" stroke-width="1.2"/><path d="M15.5 18 L17.5 20 L21 16" stroke="#f7b35b" stroke-width="1.3" fill="none"/></svg>
<div class="a" style="left:775px;top:156px;width:26px;height:26px;background:#e6e6e6;border:1px solid #8a8a8a;"></div>
<svg class="a" style="left:775px;top:156px;" width="26" height="26" viewBox="0 0 26 26"><rect x="3" y="4" width="11" height="18" fill="#3a3f3f"/><g fill="#fff"><rect x="5" y="6" width="3" height="3"/><rect x="9" y="6" width="3" height="3"/><rect x="5" y="11" width="3" height="3"/></g><path d="M11 12 H24 L19 18 V24 L16 22 V18 Z" fill="#4a90e2"/></svg>
<div class="a" style="left:802px;top:156px;width:26px;height:26px;background:#e6e6e6;border:1px solid #8a8a8a;"></div>
<svg class="a" style="left:802px;top:156px;" width="26" height="26" viewBox="0 0 26 26"><rect x="8" y="3" width="9" height="10" fill="none" stroke="#3a3f3f" stroke-width="1.2"/><rect x="3" y="4" width="11" height="18" fill="#3a3f3f"/><g fill="#fff"><rect x="5" y="6" width="3" height="3"/><rect x="9" y="6" width="3" height="3"/><rect x="5" y="11" width="3" height="3"/></g><path d="M11 12 H24 L19 18 V24 L16 22 V18 Z" fill="#4a90e2"/></svg>
<div class="a" style="left:834px;top:156px;width:26px;height:26px;background:#e6e6e6;border:1px solid #8a8a8a;"></div>
<svg class="a" style="left:834px;top:156px;" width="26" height="26" viewBox="0 0 26 26"><ellipse cx="13" cy="9.5" rx="5" ry="6.2" fill="#3a3f3f"/><path d="M3 23 Q3.5 17 9.5 16 L13 18 L16.5 16 Q22.5 17 23 23 Z" fill="#3a3f3f"/></svg>
<div class="t" style="left:286.5px;top:183.0px;height:17px;line-height:17px;font-size:12.8px;">spezifische Filter</div>
<div class="a" style="left:286px;top:203px;width:15px;height:15px;background:#fff;border:1px solid #333;"></div>
<div class="t" style="left:305.5px;top:201.5px;height:17px;line-height:17px;font-size:12.8px;">Lieferant</div>
<div class="a" style="left:364px;top:200px;width:50px;height:21px;background:#fff;border:1px solid #8a8a8a;"></div>
<div class="a" style="left:396px;top:201px;width:17px;height:19px;background:#e3e3e3;border-left:1px solid #8a8a8a;"></div>
<svg class="a" style="left:401px;top:208.5px;" width="9" height="5" viewBox="0 0 9 5"><path d="M0.5 0.5 L4.5 4.5 L8.5 0.5" fill="none" stroke="#707070" stroke-width="1.4"/></svg>
<div class="a" style="left:375.5px;top:208px;width:9.5px;height:1px;background:#666;"></div>
<div class="a" style="left:375.5px;top:212px;width:9.5px;height:1px;background:#666;"></div>
<div class="a" style="left:415px;top:200px;width:90px;height:21px;background:#fff;border:1px solid #8a8a8a;"></div>
<div class="a" style="left:486px;top:202px;width:17px;height:17px;background:#e8e8e8;border:1px solid #8a8a8a;"></div>
<div class="a" style="left:489.5px;top:209.5px;width:2.0px;height:2.0px;background:#000;"></div>
<div class="a" style="left:493.5px;top:209.5px;width:2.0px;height:2.0px;background:#000;"></div>
<div class="a" style="left:497.5px;top:209.5px;width:2.0px;height:2.0px;background:#000;"></div>
<div class="a" style="left:506px;top:200px;width:200px;height:21px;background:#f0f0f0;border:1px solid #8a8a8a;"></div>
<div class="a" style="left:286px;top:225px;width:15px;height:15px;background:#fff;border:1px solid #333;"></div>
<div class="t" style="left:305.5px;top:223.5px;height:17px;line-height:17px;font-size:12.8px;">Bezahlt</div>
<div class="a" style="left:415px;top:222px;width:90px;height:21px;background:#fff;border:1px solid #8a8a8a;"></div>
<div class="t" style="left:419px;top:224.0px;height:17px;line-height:17px;font-size:12.8px;">Nein</div>
<div class="a" style="left:487px;top:223px;width:17px;height:19px;background:#e3e3e3;border-left:1px solid #8a8a8a;"></div>
<svg class="a" style="left:492px;top:230.5px;" width="9" height="5" viewBox="0 0 9 5"><path d="M0.5 0.5 L4.5 4.5 L8.5 0.5" fill="none" stroke="#707070" stroke-width="1.4"/></svg>
<div class="a" style="left:723px;top:203px;width:15px;height:15px;background:#fff;border:1px solid #333;"></div>
<div class="t" style="left:742px;top:201.5px;height:17px;line-height:17px;font-size:12.8px;">Konto</div>
<div class="a" style="left:783px;top:200px;width:50px;height:21px;background:#fff;border:1px solid #8a8a8a;"></div>
<div class="a" style="left:815px;top:201px;width:17px;height:19px;background:#e3e3e3;border-left:1px solid #8a8a8a;"></div>
<svg class="a" style="left:820px;top:208.5px;" width="9" height="5" viewBox="0 0 9 5"><path d="M0.5 0.5 L4.5 4.5 L8.5 0.5" fill="none" stroke="#707070" stroke-width="1.4"/></svg>
<div class="a" style="left:794.5px;top:208px;width:9.5px;height:1px;background:#666;"></div>
<div class="a" style="left:794.5px;top:212px;width:9.5px;height:1px;background:#666;"></div>
<div class="a" style="left:834px;top:200px;width:90px;height:21px;background:#fff;border:1px solid #8a8a8a;"></div>
<div class="a" style="left:905px;top:202px;width:17px;height:17px;background:#e8e8e8;border:1px solid #8a8a8a;"></div>
<div class="a" style="left:908.5px;top:209.5px;width:2.0px;height:2.0px;background:#000;"></div>
<div class="a" style="left:912.5px;top:209.5px;width:2.0px;height:2.0px;background:#000;"></div>
<div class="a" style="left:916.5px;top:209.5px;width:2.0px;height:2.0px;background:#000;"></div>
<div class="a" style="left:925px;top:200px;width:200px;height:21px;background:#f0f0f0;border:1px solid #8a8a8a;"></div>
<div class="a" style="left:723px;top:225px;width:15px;height:15px;background:#fff;border:1px solid #333;"></div>
<div class="t" style="left:742px;top:223.5px;height:17px;line-height:17px;font-size:12.8px;">Freizugebende</div>
<div class="a" style="left:286px;top:278px;width:1028px;height:465px;background:#fff;border:1px solid #d0d0d0;"></div>
<div class="a" style="left:288px;top:258px;width:55px;height:21px;background:#e8e8e8;border:1px solid #d0d0d0;border-bottom:1px solid #d0d0d0;"></div>
<div class="a" style="left:395px;top:258px;width:73px;height:21px;background:#e8e8e8;border:1px solid #d0d0d0;border-bottom:1px solid #d0d0d0;"></div>
<div class="a" style="left:467px;top:258px;width:55px;height:21px;background:#e8e8e8;border:1px solid #d0d0d0;border-bottom:1px solid #d0d0d0;"></div>
<div class="a" style="left:521px;top:258px;width:63px;height:21px;background:#e8e8e8;border:1px solid #d0d0d0;border-bottom:1px solid #d0d0d0;"></div>
<div class="a" style="left:342px;top:256px;width:54px;height:23px;background:#fff;border:1px solid #d0d0d0;border-bottom:none;"></div>
<div class="t" style="left:301px;top:259.0px;height:17px;line-height:17px;font-size:12.8px;"><u>L</u>iste</div>
<div class="t" style="left:349px;top:257.5px;height:17px;line-height:17px;font-size:12.8px;"><u>D</u>etails</div>
<div class="t" style="left:402px;top:259.0px;height:17px;line-height:17px;font-size:12.8px;"><u>Z</u>ahlungen</div>
<div class="t" style="left:479px;top:259.0px;height:17px;line-height:17px;font-size:12.8px;"><u>O</u>ffen</div>
<div class="t" style="left:528px;top:259.0px;height:17px;line-height:17px;font-size:12.8px;">Freigabe</div>
<div class="a" style="left:291px;top:293px;width:740px;height:106px;border:1px solid #d5d5d5;"></div>
<div class="t" style="left:301px;top:283.3px;height:17px;line-height:17px;font-size:12.8px;background:#fff;padding:0 2px;">Rechnung</div>
<div class="t" style="left:299.5px;top:306.0px;height:17px;line-height:17px;font-size:12.8px;">Lfd. Rechnr.</div>
<div class="t" style="left:299.5px;top:328.0px;height:17px;line-height:17px;font-size:12.8px;">Rechnungsnr.</div>
<div class="t" style="left:299.5px;top:350.0px;height:17px;line-height:17px;font-size:12.8px;">Rechnungsdatum</div>
<div class="t" style="left:299.5px;top:372.0px;height:17px;line-height:17px;font-size:12.8px;">Eingangsdatum</div>
<div class="a" style="left:406px;top:304px;width:107px;height:21px;background:#f0f0f0;border:1px solid #8a8a8a;"></div>
<div class="t" style="right:825px;top:306.0px;height:17px;line-height:17px;font-size:12.8px;">10014</div>
<div class="a" style="left:406px;top:326px;width:107px;height:21px;background:#fff;border:1px solid #8a8a8a;"></div>
<div class="t" style="left:410px;top:328.0px;height:17px;line-height:17px;font-size:12.8px;">3216599</div>
<div class="a" style="left:406px;top:348px;width:107px;height:21px;background:#fff;border:1px solid #8a8a8a;"></div>
<div class="t" style="left:410px;top:350.0px;height:17px;line-height:17px;font-size:12.8px;">01.06.2021</div>
<svg class="a" style="left:497px;top:355.5px;" width="13" height="7" viewBox="0 0 13 7"><path d="M0.5 0.5 L6.5 6.5 L12.5 0.5" fill="none" stroke="#9a9a9a" stroke-width="1"/></svg>
<div class="a" style="left:406px;top:370px;width:107px;height:21px;background:#fff;border:1px solid #8a8a8a;"></div>
<div class="t" style="left:410px;top:372.0px;height:17px;line-height:17px;font-size:12.8px;">03.06.2021</div>
<svg class="a" style="left:497px;top:377.5px;" width="13" height="7" viewBox="0 0 13 7"><path d="M0.5 0.5 L6.5 6.5 L12.5 0.5" fill="none" stroke="#9a9a9a" stroke-width="1"/></svg>
<div class="t" style="left:521px;top:306.0px;height:17px;line-height:17px;font-size:12.8px;">Lieferant</div>
<div class="t" style="left:521px;top:328.0px;height:17px;line-height:17px;font-size:12.8px;">Betrag</div>
<div class="t" style="left:521px;top:350.0px;height:17px;line-height:17px;font-size:12.8px;">Text / Zweck</div>
<div class="t" style="left:521px;top:372.0px;height:17px;line-height:17px;font-size:12.8px;">GS-Nr.</div>
<div class="a" style="left:598px;top:304px;width:101px;height:21px;background:#fff;border:1px solid #8a8a8a;"></div>
<div class="t" style="right:656px;top:306.0px;height:17px;line-height:17px;font-size:12.8px;">1</div>
<div class="a" style="left:679px;top:306px;width:17px;height:17px;background:#e8e8e8;border:1px solid #8a8a8a;"></div>
<div class="a" style="left:682.5px;top:313.5px;width:2.0px;height:2.0px;background:#000;"></div>
<div class="a" style="left:686.5px;top:313.5px;width:2.0px;height:2.0px;background:#000;"></div>
<div class="a" style="left:690.5px;top:313.5px;width:2.0px;height:2.0px;background:#000;"></div>
<div class="a" style="left:699px;top:304px;width:322px;height:21px;background:#f0f0f0;border:1px solid #8a8a8a;"></div>
<div class="t" style="left:703px;top:306.0px;height:17px;line-height:17px;font-size:12.8px;">Lieferant GmbH</div>
<div class="a" style="left:598px;top:326px;width:101px;height:21px;background:#fff;border:1px solid #8a8a8a;"></div>
<div class="t" style="right:639px;top:328.0px;height:17px;line-height:17px;font-size:12.8px;">540</div>
<div class="a" style="left:699px;top:326px;width:61px;height:21px;background:#fff;border:1px solid #8a8a8a;"></div>
<div class="t" style="left:703px;top:328.0px;height:17px;line-height:17px;font-size:12.8px;">EUR</div>
<svg class="a" style="left:744px;top:333.5px;" width="13" height="7" viewBox="0 0 13 7"><path d="M0.5 0.5 L6.5 6.5 L12.5 0.5" fill="none" stroke="#9a9a9a" stroke-width="1"/></svg>
<div class="a" style="left:760px;top:326px;width:126px;height:21px;background:#f0f0f0;border:1px solid #8a8a8a;"></div>
<div class="t" style="right:452px;top:328.0px;height:17px;line-height:17px;font-size:12.8px;">540,00 &euro;</div>
<div class="t" style="left:892px;top:328.0px;height:17px;line-height:17px;font-size:12.8px;">Kurs</div>
<div class="a" style="left:924px;top:326px;width:97px;height:21px;background:#f0f0f0;border:1px solid #8a8a8a;"></div>
<div class="t" style="right:317px;top:328.0px;height:17px;line-height:17px;font-size:12.8px;">1,00000 &euro;</div>
<div class="a" style="left:598px;top:348px;width:423px;height:21px;background:#fff;border:1px solid #8a8a8a;"></div>
<div class="t" style="left:602px;top:350.0px;height:17px;line-height:17px;font-size:12.8px;">Kommission L&uuml;cker</div>
<svg class="a" style="left:1005px;top:355.5px;" width="13" height="7" viewBox="0 0 13 7"><path d="M0.5 0.5 L6.5 6.5 L12.5 0.5" fill="none" stroke="#9a9a9a" stroke-width="1"/></svg>
<div class="a" style="left:598px;top:370px;width:101px;height:21px;background:#fff;border:1px solid #8a8a8a;"></div>
<div class="t" style="left:602px;top:372.0px;height:17px;line-height:17px;font-size:12.8px;">2</div>
<svg class="a" style="left:683px;top:377.5px;" width="13" height="7" viewBox="0 0 13 7"><path d="M0.5 0.5 L6.5 6.5 L12.5 0.5" fill="none" stroke="#9a9a9a" stroke-width="1"/></svg>
<div class="a" style="left:699px;top:370px;width:322px;height:21px;background:#f0f0f0;border:1px solid #8a8a8a;"></div>
<div class="t" style="left:703px;top:372.0px;height:17px;line-height:17px;font-size:12.8px;">Hauptstelle</div>
<div class="a" style="left:1037px;top:293px;width:255px;height:106px;border:1px solid #d5d5d5;"></div>
<div class="t" style="left:1047px;top:283.3px;height:17px;line-height:17px;font-size:12.8px;background:#fff;padding:0 2px;">Zahlungsbedingungen</div>
<div class="t" style="left:1044px;top:306.0px;height:17px;line-height:17px;font-size:12.8px;">bis</div>
<div class="a" style="left:1077px;top:304px;width:90px;height:21px;background:#fff;border:1px solid #8a8a8a;"></div>
<div class="t" style="left:1081px;top:306.0px;height:17px;line-height:17px;font-size:12.8px;">08.06.2021</div>
<svg class="a" style="left:1151px;top:311.5px;" width="13" height="7" viewBox="0 0 13 7"><path d="M0.5 0.5 L6.5 6.5 L12.5 0.5" fill="none" stroke="#9a9a9a" stroke-width="1"/></svg>
<div class="t" style="left:1044px;top:328.0px;height:17px;line-height:17px;font-size:12.8px;">bis</div>
<div class="a" style="left:1077px;top:326px;width:90px;height:21px;background:#fff;border:1px solid #8a8a8a;"></div>
<div class="t" style="left:1081px;top:328.0px;height:17px;line-height:17px;font-size:12.8px;">15.06.2021</div>
<svg class="a" style="left:1151px;top:333.5px;" width="13" height="7" viewBox="0 0 13 7"><path d="M0.5 0.5 L6.5 6.5 L12.5 0.5" fill="none" stroke="#9a9a9a" stroke-width="1"/></svg>
<div class="t" style="left:1044px;top:350.0px;height:17px;line-height:17px;font-size:12.8px;">bis</div>
<div class="a" style="left:1077px;top:348px;width:90px;height:21px;background:#fff;border:1px solid #8a8a8a;"></div>
<div class="t" style="left:1081px;top:350.0px;height:17px;line-height:17px;font-size:12.8px;">22.06.2021</div>
<svg class="a" style="left:1151px;top:355.5px;" width="13" height="7" viewBox="0 0 13 7"><path d="M0.5 0.5 L6.5 6.5 L12.5 0.5" fill="none" stroke="#9a9a9a" stroke-width="1"/></svg>
<div class="t" style="left:1174px;top:306.0px;height:17px;line-height:17px;font-size:12.8px;">% Skonto</div>
<div class="t" style="left:1174px;top:328.0px;height:17px;line-height:17px;font-size:12.8px;">% Skonto</div>
<div class="a" style="left:1232px;top:304px;width:50px;height:21px;background:#fff;border:1px solid #8a8a8a;"></div>
<div class="t" style="right:56px;top:306.0px;height:17px;line-height:17px;font-size:12.8px;">3,00 %</div>
<div class="a" style="left:1232px;top:326px;width:50px;height:21px;background:#fff;border:1px solid #8a8a8a;"></div>
<div class="t" style="right:56px;top:328.0px;height:17px;line-height:17px;font-size:12.8px;">1,00 %</div>
<div class="t" style="left:1047.5px;top:373.0px;height:17px;line-height:17px;font-size:12.8px;">Zahlungsfreigabe</div>
<div class="a" style="left:1152px;top:374px;width:15px;height:15px;background:#fff;border:1px solid #333;"></div>
<div class="t" style="left:1177.5px;top:373.0px;height:17px;line-height:17px;font-size:12.8px;">Bankeinzug</div>
<div class="a" style="left:1267px;top:374px;width:15px;height:15px;background:#fff;border:1px solid #333;"></div>
<div class="a" style="left:291px;top:407px;width:1001px;height:39px;border:1px solid #d5d5d5;"></div>
<div class="t" style="left:301px;top:397.3px;height:17px;line-height:17px;font-size:12.8px;background:#fff;padding:0 2px;">Fibu</div>
<div class="a" style="left:299px;top:423px;width:15px;height:15px;background:#fff;border:1px solid #333;"></div>
<div class="t" style="left:317px;top:420.7px;height:17px;line-height:17px;font-size:12.8px;">Freigegeben am</div>
<div class="a" style="left:424px;top:419px;width:90px;height:21px;background:#fff;border:1px solid #8a8a8a;"></div>
<svg class="a" style="left:498px;top:426.5px;" width="13" height="7" viewBox="0 0 13 7"><path d="M0.5 0.5 L6.5 6.5 L12.5 0.5" fill="none" stroke="#9a9a9a" stroke-width="1"/></svg>
<div class="a" style="left:522px;top:423px;width:15px;height:15px;background:#fff;border:1px solid #333;"></div>
<div class="t" style="left:540.5px;top:420.7px;height:17px;line-height:17px;font-size:12.8px;">In Fibu &uuml;bertragen</div>
<div class="a" style="left:291px;top:457px;width:1000px;height:125px;border:1px solid #d5d5d5;"></div>
<div class="t" style="left:300px;top:447.3px;height:17px;line-height:17px;font-size:12.8px;background:#fff;padding:0 2px;">Aufteilung</div>
<div class="t" style="left:298px;top:468.0px;height:17px;line-height:17px;font-size:12.8px;">Gegenkonto</div>
<div class="t" style="left:298px;top:490.0px;height:17px;line-height:17px;font-size:12.8px;">Kostenstelle</div>
<div class="t" style="left:298px;top:512.0px;height:17px;line-height:17px;font-size:12.8px;">Kostentr&auml;ger</div>
<div class="t" style="left:298px;top:534.0px;height:17px;line-height:17px;font-size:12.8px;">Betrag</div>
<div class="t" style="left:298px;top:556.0px;height:17px;line-height:17px;font-size:12.8px;">Text / Zweck</div>
<div class="a" style="left:405px;top:466px;width:107px;height:21px;background:#fff;border:1px solid #8a8a8a;"></div>
<div class="t" style="right:843px;top:468.0px;height:17px;line-height:17px;font-size:12.8px;">8900</div>
<div class="a" style="left:492px;top:468px;width:17px;height:17px;background:#e8e8e8;border:1px solid #8a8a8a;"></div>
<div class="a" style="left:495.5px;top:475.5px;width:2.0px;height:2.0px;background:#000;"></div>
<div class="a" style="left:499.5px;top:475.5px;width:2.0px;height:2.0px;background:#000;"></div>
<div class="a" style="left:503.5px;top:475.5px;width:2.0px;height:2.0px;background:#000;"></div>
<div class="a" style="left:513px;top:466px;width:184px;height:21px;background:#f0f0f0;border:1px solid #8a8a8a;"></div>
<div class="t" style="left:517px;top:468.0px;height:17px;line-height:17px;font-size:12.8px;">sonstiges Inland</div>
<div class="a" style="left:405px;top:488px;width:107px;height:21px;background:#fff;border:1px solid #8a8a8a;"></div>
<div class="t" style="left:409px;top:490.0px;height:17px;line-height:17px;font-size:12.8px;">0</div>
<svg class="a" style="left:496px;top:495.5px;" width="13" height="7" viewBox="0 0 13 7"><path d="M0.5 0.5 L6.5 6.5 L12.5 0.5" fill="none" stroke="#9a9a9a" stroke-width="1"/></svg>
<div class="a" style="left:513px;top:488px;width:184px;height:21px;background:#f0f0f0;border:1px solid #8a8a8a;"></div>
<div class="a" style="left:405px;top:510px;width:107px;height:21px;background:#fff;border:1px solid #8a8a8a;"></div>
<svg class="a" style="left:496px;top:517.5px;" width="13" height="7" viewBox="0 0 13 7"><path d="M0.5 0.5 L6.5 6.5 L12.5 0.5" fill="none" stroke="#9a9a9a" stroke-width="1"/></svg>
<div class="a" style="left:513px;top:510px;width:184px;height:21px;background:#f0f0f0;border:1px solid #8a8a8a;"></div>
<div class="a" style="left:405px;top:532px;width:107px;height:21px;background:#fff;border:1px solid #8a8a8a;"></div>
<div class="t" style="right:826px;top:534.0px;height:17px;line-height:17px;font-size:12.8px;">540,00 &euro;</div>
<div class="t" style="left:520px;top:534.5px;height:17px;line-height:17px;font-size:12.8px;">MWSt.</div>
<div class="a" style="left:597px;top:532px;width:49px;height:21px;background:#fff;border:1px solid #8a8a8a;"></div>
<div class="t" style="left:601px;top:534.0px;height:17px;line-height:17px;font-size:12.8px;">7</div>
<svg class="a" style="left:630px;top:539.5px;" width="13" height="7" viewBox="0 0 13 7"><path d="M0.5 0.5 L6.5 6.5 L12.5 0.5" fill="none" stroke="#9a9a9a" stroke-width="1"/></svg>
<div class="a" style="left:647px;top:532px;width:50px;height:21px;background:#f0f0f0;border:1px solid #8a8a8a;"></div>
<div class="t" style="right:641px;top:534.0px;height:17px;line-height:17px;font-size:12.8px;">0,00 %</div>
<div class="a" style="left:405px;top:554px;width:292px;height:21px;background:#fff;border:1px solid #8a8a8a;"></div>
<svg class="a" style="left:681px;top:561.5px;" width="13" height="7" viewBox="0 0 13 7"><path d="M0.5 0.5 L6.5 6.5 L12.5 0.5" fill="none" stroke="#9a9a9a" stroke-width="1"/></svg>
<div class="t" style="left:711.5px;top:468.0px;height:17px;line-height:17px;font-size:12.8px;">Bestellung</div>
<div class="t" style="left:711.5px;top:490.0px;height:17px;line-height:17px;font-size:12.8px;">Vertrag</div>
<div class="t" style="left:711.5px;top:512.0px;height:17px;line-height:17px;font-size:12.8px;">Auftrag</div>
<div class="t" style="left:711.5px;top:534.0px;height:17px;line-height:17px;font-size:12.8px;">Kostencode</div>
<div class="a" style="left:789px;top:466px;width:100px;height:21px;background:#fff;border:1px solid #8a8a8a;"></div>
<div class="a" style="left:871px;top:468px;width:16px;height:17px;background:#e8e8e8;border:1px solid #8a8a8a;"></div>
<div class="a" style="left:874.0px;top:475.5px;width:2.0px;height:2.0px;background:#000;"></div>
<div class="a" style="left:878.0px;top:475.5px;width:2.0px;height:2.0px;background:#000;"></div>
<div class="a" style="left:882.0px;top:475.5px;width:2.0px;height:2.0px;background:#000;"></div>
<div class="a" style="left:891px;top:466px;width:205px;height:21px;background:#f0f0f0;border:1px solid #8a8a8a;"></div>
<div class="t" style="left:1101px;top:468.0px;height:17px;line-height:17px;font-size:12.8px;">Wareneingang</div>
<div class="a" style="left:1188px;top:466px;width:90px;height:21px;background:#fff;border:1px solid #8a8a8a;"></div>
<div class="a" style="left:1259px;top:468px;width:17px;height:17px;background:#e8e8e8;border:1px solid #8a8a8a;"></div>
<div class="a" style="left:1262.5px;top:475.5px;width:2.0px;height:2.0px;background:#000;"></div>
<div class="a" style="left:1266.5px;top:475.5px;width:2.0px;height:2.0px;background:#000;"></div>
<div class="a" style="left:1270.5px;top:475.5px;width:2.0px;height:2.0px;background:#000;"></div>
<div class="a" style="left:789px;top:488px;width:100px;height:21px;background:#fff;border:1px solid #8a8a8a;"></div>
<div class="a" style="left:871px;top:490px;width:16px;height:17px;background:#e8e8e8;border:1px solid #8a8a8a;"></div>
<div class="a" style="left:874.0px;top:497.5px;width:2.0px;height:2.0px;background:#000;"></div>
<div class="a" style="left:878.0px;top:497.5px;width:2.0px;height:2.0px;background:#000;"></div>
<div class="a" style="left:882.0px;top:497.5px;width:2.0px;height:2.0px;background:#000;"></div>
<div class="a" style="left:891px;top:488px;width:387px;height:21px;background:#f0f0f0;border:1px solid #8a8a8a;"></div>
<div class="a" style="left:789px;top:510px;width:100px;height:21px;background:#fff;border:1px solid #8a8a8a;"></div>
<div class="t" style="right:465px;top:512.0px;height:17px;line-height:17px;font-size:12.8px;">100003</div>
<div class="a" style="left:871px;top:512px;width:16px;height:17px;background:#e8e8e8;border:1px solid #8a8a8a;"></div>
<div class="a" style="left:874.0px;top:519.5px;width:2.0px;height:2.0px;background:#000;"></div>
<div class="a" style="left:878.0px;top:519.5px;width:2.0px;height:2.0px;background:#000;"></div>
<div class="a" style="left:882.0px;top:519.5px;width:2.0px;height:2.0px;background:#000;"></div>
<div class="a" style="left:891px;top:510px;width:335px;height:21px;background:#f0f0f0;border:1px solid #8a8a8a;"></div>
<div class="t" style="left:895px;top:512.0px;height:17px;line-height:17px;font-size:12.8px;">Beratung Brandschutz</div>
<div class="a" style="left:1228px;top:510px;width:50px;height:21px;background:#fff;border:1px solid #8a8a8a;"></div>
<div class="t" style="left:1232px;top:512.0px;height:17px;line-height:17px;font-size:12.8px;">1</div>
<svg class="a" style="left:1262px;top:517.5px;" width="13" height="7" viewBox="0 0 13 7"><path d="M0.5 0.5 L6.5 6.5 L12.5 0.5" fill="none" stroke="#9a9a9a" stroke-width="1"/></svg>
<div class="a" style="left:789px;top:532px;width:100px;height:21px;background:#fff;border:1px solid #8a8a8a;"></div>
<svg class="a" style="left:873px;top:539.5px;" width="13" height="7" viewBox="0 0 13 7"><path d="M0.5 0.5 L6.5 6.5 L12.5 0.5" fill="none" stroke="#9a9a9a" stroke-width="1"/></svg>
<div class="a" style="left:891px;top:532px;width:387px;height:21px;background:#f0f0f0;border:1px solid #8a8a8a;"></div>
<div class="t" style="left:714.5px;top:556.0px;height:17px;line-height:17px;font-size:12.8px;">Nachkalkulation Auftrag</div>
<div class="a" style="left:874px;top:558px;width:15px;height:14px;background:#f7c27a;"></div>
<svg class="a" style="left:874px;top:558px;" width="15" height="14" viewBox="0 0 15 14"><path d="M3 7 L6 10 L12 3.5" fill="none" stroke="#fff" stroke-width="1.5"/></svg>
<div class="a" style="left:1188px;top:555px;width:90px;height:23px;background:#e6e6e6;border:1px solid #8a8a8a;"></div>
<div class="t" style="left:1133.0px;width:200px;text-align:center;top:558.0px;height:17px;line-height:17px;font-size:12.8px;">Sp<u>e</u>ichern</div>
<div class="a" style="left:291px;top:588px;width:1012px;height:127px;background:#fff;border:1px solid #8a8a8a;"></div>
<div class="a" style="left:296px;top:623px;width:988px;height:1px;background:#e6e6e6;"></div>
<div class="a" style="left:292px;top:643px;width:992px;height:1px;background:#c8c8c8;"></div>
<div class="a" style="left:304px;top:589px;width:1px;height:54px;background:#e6e6e6;"></div>
<div class="a" style="left:337px;top:589px;width:1px;height:54px;background:#e6e6e6;"></div>
<div class="a" style="left:409px;top:589px;width:1px;height:54px;background:#e6e6e6;"></div>
<div class="a" style="left:484px;top:589px;width:1px;height:54px;background:#e6e6e6;"></div>
<div class="a" style="left:560px;top:589px;width:1px;height:54px;background:#e6e6e6;"></div>
<div class="a" style="left:656px;top:589px;width:1px;height:54px;background:#e6e6e6;"></div>
<div class="a" style="left:726px;top:589px;width:1px;height:54px;background:#e6e6e6;"></div>
<div class="a" style="left:941px;top:589px;width:1px;height:54px;background:#e6e6e6;"></div>
<div class="a" style="left:1016px;top:589px;width:1px;height:54px;background:#e6e6e6;"></div>
<div class="a" style="left:1102px;top:589px;width:1px;height:54px;background:#e6e6e6;"></div>
<div class="a" style="left:1184px;top:589px;width:1px;height:54px;background:#e6e6e6;"></div>
<div class="a" style="left:1259px;top:606px;width:1px;height:37px;background:#e6e6e6;"></div>
<div class="a" style="left:1184px;top:606px;width:100px;height:1px;background:#e6e6e6;"></div>
<div class="t" style="left:307px;top:598.5px;height:16px;line-height:16px;font-size:12px;">P...</div>
<div class="t" style="left:340px;top:598.5px;height:16px;line-height:16px;font-size:12px;">Gegenkonto</div>
<div class="t" style="left:412px;top:598.5px;height:16px;line-height:16px;font-size:12px;">Kostenstelle</div>
<div class="t" style="left:487px;top:598.5px;height:16px;line-height:16px;font-size:12px;">Kostentr&auml;ger</div>
<div class="t" style="left:562px;top:598.5px;height:16px;line-height:16px;font-size:12px;">Nettobetrag</div>
<div class="t" style="left:659px;top:598.5px;height:16px;line-height:16px;font-size:12px;">MWSt-Code</div>
<div class="t" style="left:728px;top:598.5px;height:16px;line-height:16px;font-size:12px;">Text</div>
<div class="t" style="left:944px;top:598.5px;height:16px;line-height:16px;font-size:12px;">Bestellung</div>
<div class="t" style="left:1019px;top:598.5px;height:16px;line-height:16px;font-size:12px;">Wareneingang</div>
<div class="t" style="left:1104px;top:598.5px;height:16px;line-height:16px;font-size:12px;">Vertrag</div>
<div class="t" style="left:327px;top:599.0px;height:14px;line-height:14px;font-size:10px;color:#888;">&#8260;</div>
<div class="t" style="left:1187px;top:607.5px;height:16px;line-height:16px;font-size:12px;">Nr.</div>
<div class="t" style="left:1262px;top:608.0px;height:16px;line-height:16px;font-size:12px;">Gew</div>
<svg class="a" style="left:296px;top:628px;" width="6" height="11" viewBox="0 0 6 11"><path d="M0 0 L6 5.5 L0 11 Z" fill="#000"/></svg>
<div class="a" style="left:305px;top:624px;width:32px;height:19px;background:#fdd39a;outline:1px dotted #333;outline-offset:-1px;"></div>
<div class="t" style="right:999px;top:626.5px;height:17px;line-height:17px;font-size:12.4px;color:#555;">1</div>
<div class="t" style="right:927px;top:626.5px;height:17px;line-height:17px;font-size:12.4px;">8900</div>
<div class="t" style="right:852px;top:626.5px;height:17px;line-height:17px;font-size:12.4px;">0</div>
<div class="t" style="right:680px;top:626.5px;height:17px;line-height:17px;font-size:12.4px;">540,00 &euro;</div>
<div class="t" style="right:610px;top:626.5px;height:17px;line-height:17px;font-size:12.4px;">7</div>
<div class="t" style="right:78px;top:626.5px;height:17px;line-height:17px;font-size:12.4px;">100003</div>
<div class="a" style="left:1284px;top:589px;width:18px;height:107px;background:#f0f0f0;"></div>
<div class="a" style="left:1285px;top:607px;width:15px;height:72px;background:#cdcdcd;"></div>
<svg class="a" style="left:1290px;top:684.5px;" width="7" height="4" viewBox="0 0 7 4"><path d="M0.5 0.5 L3.5 3.5 L6.5 0.5" fill="none" stroke="#888" stroke-width="1"/></svg>
<svg class="a" style="left:1289.5px;top:596px;" width="7" height="4" viewBox="0 0 7 4"><path d="M0.5 3.5 L3.5 0.5 L6.5 3.5" fill="none" stroke="#888" stroke-width="1.4"/></svg>
<div class="a" style="left:292px;top:696px;width:992px;height:18px;background:#f0f0f0;"></div>
<div class="a" style="left:310px;top:697px;width:17px;height:16px;background:#cdcdcd;"></div>
<svg class="a" style="left:296px;top:701px;" width="4" height="7" viewBox="0 0 4 7"><path d="M3.5 0.5 L0.5 3.5 L3.5 6.5" fill="none" stroke="#888" stroke-width="1"/></svg>
<svg class="a" style="left:1273px;top:701px;" width="4" height="7" viewBox="0 0 4 7"><path d="M0.5 0.5 L3.5 3.5 L0.5 6.5" fill="none" stroke="#888" stroke-width="1"/></svg>
<div class="a" style="left:1284px;top:696px;width:18px;height:18px;background:#f0f0f0;"></div>
<div class="a" style="left:292px;top:722px;width:81px;height:21px;background:#fff;border:1px solid #8a8a8a;"></div>
<div class="a" style="left:376px;top:722px;width:230px;height:20px;background:#ececec;"></div>
<svg class="a" style="left:376px;top:722px;" width="230" height="20" viewBox="0 0 230 20"><rect x="6" y="4" width="2" height="12" fill="#3a3f3f"/><path d="M16 4 L9 10 L16 16 Z" fill="#3a3f3f"/><path d="M38 4 L31 10 L38 16 Z" fill="#3a3f3f"/><path d="M54 4 L61 10 L54 16 Z" fill="#c4c4c4"/><path d="M74 4 L81 10 L74 16 Z" fill="#c4c4c4"/><rect x="83" y="4" width="2" height="12" fill="#c4c4c4"/><g fill="none" stroke="#3a3f3f" stroke-width="2"><path d="M108 9 A5.5 5.5 0 0 0 97.5 8.5"/><path d="M97 12 A5.5 5.5 0 0 0 107.5 12.5"/></g><path d="M105 8 L110 9.5 L109 4 Z" fill="#3a3f3f"/><path d="M100 12 L95 11 L96 16.5 Z" fill="#3a3f3f"/><rect x="119" y="9" width="14" height="2" fill="#3a3f3f"/><rect x="125" y="3" width="2" height="14" fill="#3a3f3f"/><path d="M153 4 L156 7 L147 16 L143 17 L144 13 Z" fill="#3a3f3f"/><path d="M166 10 L171 15 L180 6" fill="none" stroke="#c4c4c4" stroke-width="2.4"/><path d="M192 7 Q199 6 199 10 Q199 13 195 16" fill="none" stroke="#c4c4c4" stroke-width="2"/><path d="M190 4 L190 10 L195 8 Z" fill="#c4c4c4"/><rect x="211" y="9" width="14" height="2" fill="#3a3f3f"/></svg>
<div class="t" style="left:612px;top:725.0px;height:17px;line-height:17px;font-size:12.8px;">Restbetrag:</div>
<div class="a" style="left:680px;top:723px;width:100px;height:21px;background:#f0f0f0;border:1px solid #8a8a8a;"></div>
<div class="t" style="right:558px;top:725.0px;height:17px;line-height:17px;font-size:12.8px;">0,00 &euro;</div>
<div class="t" style="left:788px;top:725.5px;height:15px;line-height:15px;font-size:11px;">Letzte &Auml;nderung 03.06.2021</div>
<div class="t" style="left:937.5px;top:725.5px;height:15px;line-height:15px;font-size:11.3px;">durch Klaus Spitzenverk&auml;ufer</div>
<div class="a" style="left:287px;top:739px;width:1026px;height:3px;background:#fff;"></div>
<div class="a" style="left:287px;top:742px;width:1026px;height:1px;background:#d0d0d0;"></div>
<div class="a" style="left:278px;top:743px;width:1045px;height:3px;background:#fff;"></div>
<div class="a" style="left:286px;top:746px;width:175px;height:23px;background:#e6e6e6;border:1px solid #8a8a8a;"></div>
<div class="t" style="left:286.0px;width:175px;text-align:center;top:749.0px;height:17px;line-height:17px;font-size:12.8px;">Freigabeprozess starten</div>
<div class="a" style="left:462px;top:746px;width:150px;height:23px;background:#e6e6e6;border:1px solid #8a8a8a;"></div>
<div class="t" style="left:462.0px;width:150px;text-align:center;top:749.0px;height:17px;line-height:17px;font-size:12.8px;">Dokument hinzuf&uuml;gen</div>
<div class="a" style="left:613px;top:746px;width:150px;height:23px;background:#e6e6e6;border:1px solid #8a8a8a;"></div>
<div class="t" style="left:613.0px;width:150px;text-align:center;top:749.0px;height:17px;line-height:17px;font-size:12.8px;">Rechnungsdokument</div>
<div class="a" style="left:769px;top:746px;width:125px;height:23px;background:#e6e6e6;border:1px solid #8a8a8a;"></div>
<div class="t" style="left:769.0px;width:125px;text-align:center;top:749.0px;height:17px;line-height:17px;font-size:12.8px;">ZUGFeRD-Datei</div>
<div class="a" style="left:900px;top:746px;width:100px;height:23px;background:#e6e6e6;border:1px solid #8a8a8a;"></div>
<div class="t" style="left:900.0px;width:100px;text-align:center;top:749.0px;height:17px;line-height:17px;font-size:12.8px;">Be<u>m</u>erkung</div>
<div class="a" style="left:277px;top:776px;width:1px;height:30px;background:#8c8c8c;"></div>
<svg class="a" style="left:1176px;top:780px;" width="20" height="20" viewBox="0 0 20 20"><circle cx="10" cy="11" r="6.5" fill="none" stroke="#3a3f3f" stroke-width="1.8"/><rect x="8.5" y="2" width="3" height="2" fill="#3a3f3f"/><path d="M10 7 V11" stroke="#3a3f3f" stroke-width="1.6"/><path d="M16 4 L17 5" stroke="#3a3f3f" stroke-width="1.4"/></svg>
<svg class="a" style="left:1206px;top:780px;" width="24" height="22" viewBox="0 0 24 22"><rect x="11" y="1.5" width="10" height="11.5" fill="#f7b35b"/><g fill="#fff"><rect x="12.5" y="3" width="1.5" height="1.5"/><rect x="15.5" y="3" width="1.5" height="1.5"/><rect x="18.5" y="3" width="1.5" height="1.5"/><rect x="12.5" y="6" width="1.5" height="1.5"/><rect x="15.5" y="6" width="1.5" height="1.5"/><rect x="18.5" y="6" width="1.5" height="1.5"/></g><rect x="3" y="7" width="10.5" height="13" fill="#3a3f3f" stroke="#f0f0f0" stroke-width="0.8"/><g fill="#fff"><rect x="4.5" y="9" width="1.6" height="1.6"/><rect x="7.5" y="9" width="1.6" height="1.6"/><rect x="10.5" y="9" width="1.6" height="1.6"/><rect x="4.5" y="12" width="1.6" height="1.6"/><rect x="7.5" y="12" width="1.6" height="1.6"/><rect x="10.5" y="12" width="1.6" height="1.6"/><rect x="4.5" y="15" width="1.6" height="1.6"/><rect x="7.5" y="15" width="1.6" height="1.6"/><rect x="10.5" y="15" width="1.6" height="1.6"/></g><rect x="2" y="19.5" width="13" height="1.2" fill="#3a3f3f"/><path d="M4 5.5 Q5 3 9 2.5" fill="none" stroke="#3a3f3f" stroke-width="1.2"/><path d="M8 1 L10 2.5 L8 4" fill="#3a3f3f"/><path d="M21 15.5 Q20 19 16 19.5" fill="none" stroke="#3a3f3f" stroke-width="1.2"/><path d="M17 18 L15 19.5 L17 21" fill="#3a3f3f"/></svg>
<svg class="a" style="left:1240px;top:782px;" width="20" height="18" viewBox="0 0 20 18"><path d="M3 2 Q1 4 3 9 Q6 14 11 16 Q13 16 14 14 L11 11 L9 12 Q6 10 5 7 L6 5 Z" fill="#888"/><path d="M10 3 Q15 4 16 9 M11 0.5 Q18 2 19 9" fill="none" stroke="#bbb" stroke-width="0.9"/></svg>
<svg class="a" style="left:1275px;top:781px;" width="16" height="18" viewBox="0 0 16 18"><path d="M4 8 V6 Q4 2 8 2 Q12 2 12 6 V8" fill="none" stroke="#3a3f3f" stroke-width="2"/><rect x="2" y="8" width="12" height="9" rx="1" fill="#3a3f3f"/><rect x="7" y="11" width="2" height="3" fill="#fff"/></svg>
<svg class="a" style="left:1298px;top:780px;" width="24" height="20" viewBox="0 0 24 20"><g fill="#3a3f3f"><ellipse cx="7" cy="3.5" rx="5.5" ry="2.2"/><rect x="1.5" y="5" width="11" height="3.5" rx="1"/><rect x="1.5" y="9.5" width="11" height="3.5" rx="1"/><rect x="1.5" y="14" width="11" height="3.5" rx="1"/></g><circle cx="13.7" cy="7.5" r="3.4" fill="#fff" stroke="#f7b35b" stroke-width="1.3"/></svg>
</body></html>
